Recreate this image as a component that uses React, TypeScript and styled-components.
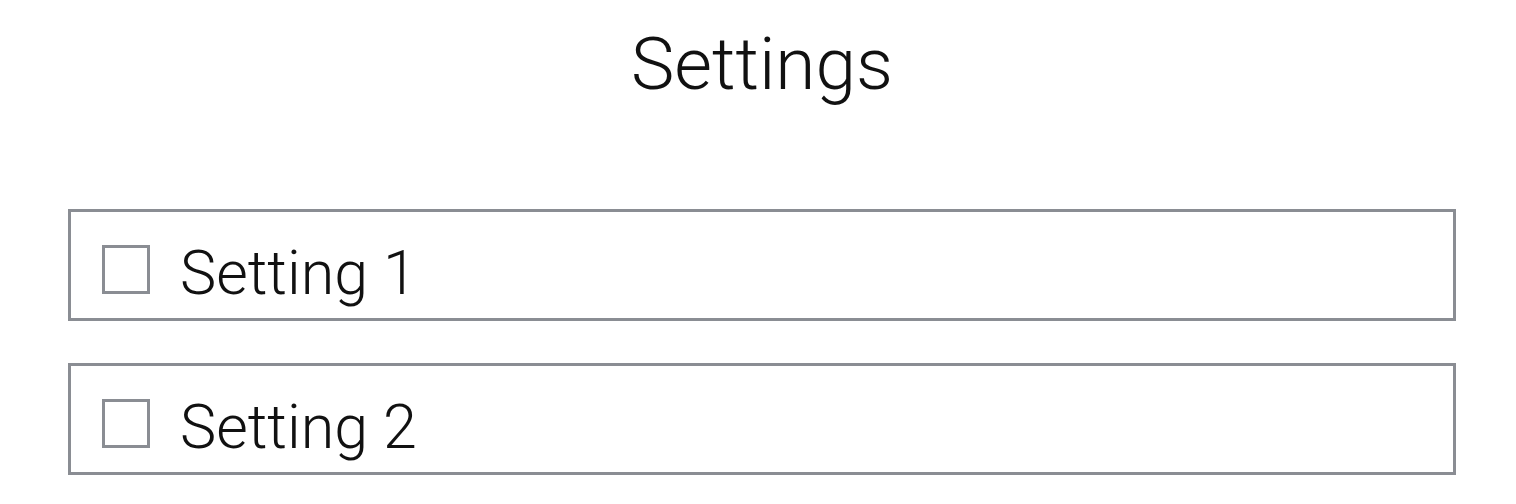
import styled, { createGlobalStyle } from "styled-components";

const GlobalStyle = createGlobalStyle`
  html, body {
    margin: 0;
    padding: 0;
    background: #ffffff;
  }
  body {
    font-family: Roboto, "Liberation Sans", sans-serif;
    color: #111111;
  }
`;

const Page = styled.div`
  padding: 0 60px 0 68px;
`;

const Title = styled.h1`
  margin: 0;
  padding-top: 20px;
  height: 209px;
  box-sizing: border-box;
  text-align: center;
  font-size: 73px;
  font-weight: 300;
  line-height: 88px;
  color: #111111;
`;

const List = styled.div`
  display: flex;
  flex-direction: column;
  gap: 42px;
`;

const Row = styled.label`
  display: flex;
  align-items: center;
  gap: 30px;
  height: 112px;
  box-sizing: border-box;
  padding: 8px 0 0 31px;
  border: 3px solid #8a8d93;
`;

const Box = styled.span<{ $checked: boolean }>`
  width: 48px;
  height: 49px;
  box-sizing: border-box;
  border: 3px solid #8a8d93;
  background: ${(p) => (p.$checked ? "#8a8d93" : "#ffffff")};
`;

const Label = styled.span`
  margin-top: 8px;
  font-size: 61px;
  font-weight: 300;
  color: #111111;
`;

const settings = [
  { id: 1, name: "Setting 1", checked: false },
  { id: 2, name: "Setting 2", checked: false },
];

function App() {
  return (
    <>
      <GlobalStyle />
      <Page>
        <Title>Settings</Title>
        <List>
          {settings.map((s) => (
            <Row key={s.id}>
              <Box $checked={s.checked} />
              <Label>{s.name}</Label>
            </Row>
          ))}
        </List>
      </Page>
    </>
  );
}

export default App;
